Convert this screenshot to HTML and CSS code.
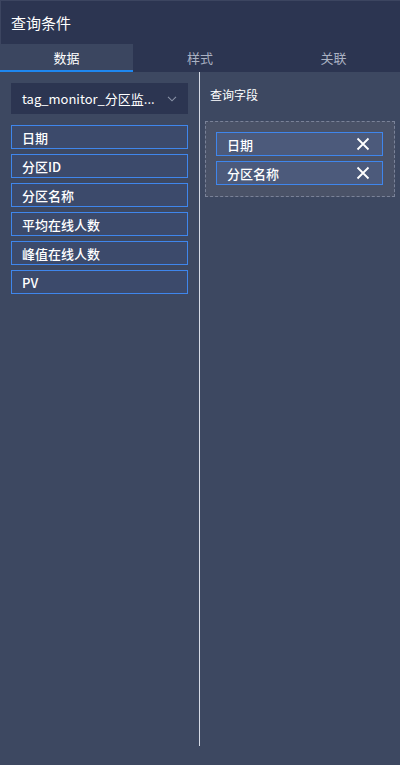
FILE: index.html
```html
<!DOCTYPE html>
<html>
<head>
<meta charset="utf-8">
<link rel="stylesheet" href="styles.css">
</head>
<body>
<div class="panel">
  <div class="header">查询条件</div>
  <div class="tabs">
    <div class="tab active">数据</div>
    <div class="tab">样式</div>
    <div class="tab">关联</div>
  </div>
  <div class="body">
    <div class="left">
      <div class="select">
        <span class="select-text">tag_monitor_分区监...</span>
        <svg class="chev" width="10" height="6" viewBox="0 0 10 6"><path d="M1 0.8 L5 4.8 L9 0.8" fill="none" stroke="#8a93a8" stroke-width="1.1"/></svg>
      </div>
      <div class="fields">
        <div class="field">日期</div>
        <div class="field">分区ID</div>
        <div class="field">分区名称</div>
        <div class="field">平均在线人数</div>
        <div class="field">峰值在线人数</div>
        <div class="field">PV</div>
      </div>
    </div>
    <div class="divider"></div>
    <div class="right">
      <div class="rtitle">查询字段</div>
      <div class="dropzone">
        <div class="chip"><span>日期</span><svg width="14" height="14" viewBox="0 0 14 14"><path d="M1.5 1.5 L12.5 12.5 M12.5 1.5 L1.5 12.5" stroke="#ffffff" stroke-width="1.8"/></svg></div>
        <div class="chip"><span>分区名称</span><svg width="14" height="14" viewBox="0 0 14 14"><path d="M1.5 1.5 L12.5 12.5 M12.5 1.5 L1.5 12.5" stroke="#ffffff" stroke-width="1.8"/></svg></div>
      </div>
    </div>
  </div>
</div>
</body>
</html>
```
FILE: styles.css
```css
* { box-sizing: border-box; }
html, body { margin: 0; padding: 0; }
body {
  width: 400px; height: 765px;
  background: #3d4861;
  font-family: "Noto Sans CJK SC", "Microsoft YaHei", sans-serif;
  color: #fff;
  overflow: hidden;
}
.panel { width: 400px; height: 765px; display: flex; flex-direction: column; background: #3d4861; }
.header {
  height: 44px;
  background: #2c3551;
  border-top: 1px solid #3c4560;
  border-left: 1px solid #3c4560;
  padding-left: 10px;
  font-size: 15px;
  line-height: 43px;
  color: #fff;
}
.tabs { display: flex; height: 28px; background: #2c3551; }
.tab {
  width: 133px; text-align: center; font-size: 13px; line-height: 28px; color: #aab1c2;
  border-bottom: 2px solid transparent;
}
.tab:nth-child(2) { width: 134px; }
.tab.active { background: #3b4660; color: #fff; border-bottom-color: #1e87f0; }
.body { display: flex; flex: 1; }
.left { width: 199px; padding: 11px 11px 0 11px; }
.select {
  height: 31px; background: #2c3551; display: flex; align-items: center; justify-content: space-between;
  padding: 0 11px 0 11px; font-size: 13px;
}
.select-text { color: #fff; }
.chev { margin-top: 1px; }
.fields { display: flex; flex-direction: column; gap: 5px; margin-top: 11px; }
.field {
  height: 24px; border: 1px solid #3f86ec; background: #3c4a6b;
  padding-left: 10px; font-size: 13px; line-height: 23px; color: #fff; font-weight: 500;
}
.divider { width: 1px; background: #d6dbe6; height: 674px; }
.right { flex: 1; padding: 12px 5px 0 5px; }
.rtitle { font-size: 12px; padding-left: 5px; line-height: 22px; color: #fff; }
.dropzone {
  margin-top: 15px; height: 76px; border: 1px dashed #7a8298; background: #4a5267;
  padding: 10px 11px 0 10px; display: flex; flex-direction: column; gap: 5px;
}
.chip {
  height: 24px; border: 1px solid #3f86ec; background: #4c5a7b;
  display: flex; align-items: center; justify-content: space-between;
  padding: 0 12px 0 10px; font-size: 13px; color: #fff; font-weight: 500;
}
```
